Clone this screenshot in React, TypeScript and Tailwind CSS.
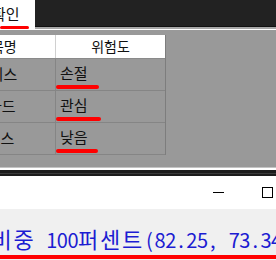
import React from 'react';

const rows = [
  { name: '서비스', nameOffset: '-ml-[24px]', risk: '손절', bar: 'w-[43px]' },
  { name: '카드', nameOffset: '-ml-[12px]', risk: '관심', bar: 'w-[45px]' },
  { name: '클래스', nameOffset: '-ml-[27px]', risk: '낮음', bar: 'w-[42px]' },
];

// bottom line: Korean full width, ASCII half width (Gulim-style fixed pitch)
const line = '투자 비중 100퍼센트(82.25, 73.34)';
const isKo = (c: string) => c.charCodeAt(0) > 0x2000;

const App: React.FC = () => {
  return (
    <div
      className="w-[276px] h-[260px] overflow-hidden flex flex-col bg-[#9a9a9a]"
      style={{ fontFamily: '"Noto Sans CJK KR", "Noto Sans", sans-serif' }}
    >
      {/* top tab strip */}
      <div className="relative h-[27px] shrink-0 bg-[#222222] border-b border-[#111111]">
        <div className="absolute left-0 top-0 w-[35px] h-[29px] bg-white overflow-hidden">
          <span className="block -ml-[8px] mt-[4px] text-[15px] leading-[20px] text-[#111] whitespace-nowrap">
            확인
          </span>
          <div className="absolute left-0 bottom-0 w-[29px] h-[3px] rounded-full bg-[#ff0000]" />
        </div>
      </div>
      <div className="h-[2px] shrink-0 bg-[#a8a8a8]" />
      <div className="h-[1px] shrink-0 bg-white" />

      {/* table area */}
      <div className="h-[137px] shrink-0 pt-[5px] bg-[#999999]">
        <div className="w-[166px] border-r border-[#7d7d7d]">
          <div className="flex h-[24px] bg-white border-b border-[#8a8a8a] text-[14px] text-[#111]">
            <div className="w-[56px] border-r border-[#d0d0d0] overflow-hidden flex items-center">
              <span className="-ml-[22px] whitespace-nowrap">항목명</span>
            </div>
            <div className="flex-1 flex items-center justify-center">위험도</div>
          </div>
          {rows.map((r) => (
            <div key={r.risk} className="flex h-[32px] border-b border-[#858585] text-[15px] text-[#111]">
              <div className="w-[56px] border-r border-[#858585] overflow-hidden flex items-center">
                <span className={`${r.nameOffset} whitespace-nowrap`}>{r.name}</span>
              </div>
              <div className="flex-1 relative flex items-center pl-[4px] pb-[2px]">
                <span>{r.risk}</span>
                <div className={`absolute left-[0px] bottom-[1px] ${r.bar} h-[4px] rounded-full bg-[#ff0000]`} />
              </div>
            </div>
          ))}
        </div>
      </div>
      <div className="h-[1px] shrink-0 bg-[#c4c4c4]" />
      <div className="h-[2px] shrink-0 bg-white" />
      <div className="h-[6px] shrink-0 bg-[#1c1c1c] flex flex-col justify-center">
        <div className="h-[1px] bg-[#3a3a3a]" />
      </div>

      {/* lower window */}
      <div className="h-[33px] shrink-0 bg-white flex items-center justify-end">
        <div className="w-[11px] h-[1px] bg-black mr-[38px]" />
        <div className="w-[11px] h-[11px] border border-black mr-[3px]" />
      </div>
      <div className="flex-1 bg-[#f0f0f0] relative overflow-hidden">
        <div className="-ml-[63px] mt-[15px] flex items-baseline leading-[28px] text-[#1c1cd2] whitespace-pre">
          {line.split('').map((c, i) =>
            isKo(c) ? (
              <span key={i} className="w-[22px] shrink-0 text-[22px]">
                {c}
              </span>
            ) : (
              <span key={i} className="w-[10.6px] shrink-0 text-center text-[20px]">
                {c}
              </span>
            )
          )}
        </div>
        <div className="absolute left-0 right-0 bottom-[1px] h-[4px] bg-[#ff0000]" />
      </div>
    </div>
  );
};

export default App;
